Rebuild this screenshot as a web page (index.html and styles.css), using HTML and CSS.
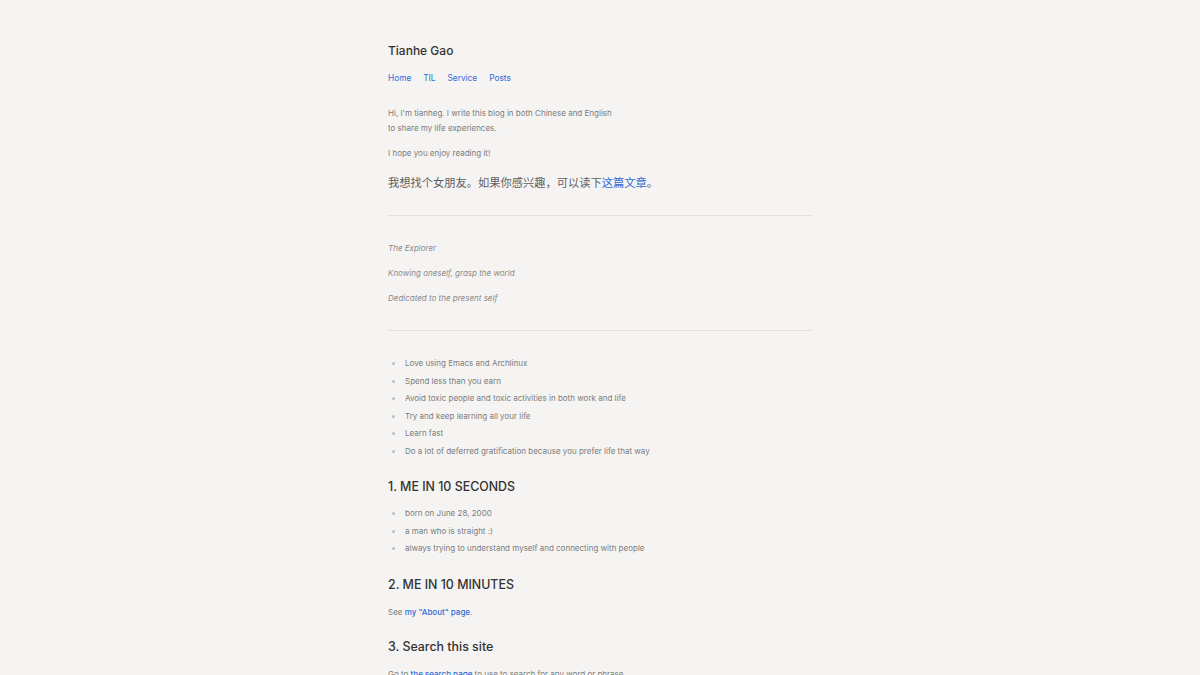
FILE: index.html
```html
<!DOCTYPE html>
<html lang="en">
<head>
    <meta charset="UTF-8">
    <meta name="viewport" content="width=device-width, initial-scale=1.0">
    <title>Tianhe Gao</title>
    <link rel="stylesheet" href="styles.css">
</head>
<body>
    <div class="page">
        <header class="site-header">
            <h1 class="site-title">Tianhe Gao</h1>
            <nav class="nav">
                <a href="#">Home</a>
                <a href="#">TIL</a>
                <a href="#">Service</a>
                <a href="#">Posts</a>
            </nav>
        </header>

        <main>
            <p class="intro">Hi, I'm tianheg. I write this blog in both Chinese and English<br>to share my life experiences.</p>
            <p class="intro">I hope you enjoy reading it!</p>
            <p class="zh">我想找个女朋友。如果你感兴趣，可以读下<a href="#">这篇文章</a>。</p>

            <hr>

            <div class="motto">
                <p>The Explorer</p>
                <p>Knowing oneself, grasp the world</p>
                <p>Dedicated to the present self</p>
            </div>

            <hr>

            <ul class="list">
                <li>Love using Emacs and Archlinux</li>
                <li>Spend less than you earn</li>
                <li>Avoid toxic people and toxic activities in both work and life</li>
                <li>Try and keep learning all your life</li>
                <li>Learn fast</li>
                <li>Do a lot of deferred gratification because you prefer life that way</li>
            </ul>

            <h2>1. ME IN 10 SECONDS</h2>
            <ul class="list">
                <li>born on June 28, 2000</li>
                <li>a man who is straight :)</li>
                <li>always trying to understand myself and connecting with people</li>
            </ul>

            <h2>2. ME IN 10 MINUTES</h2>
            <p class="text">See <a href="#">my "About" page</a>.</p>

            <h2>3. Search this site</h2>
            <p class="text">Go to <a href="#">the search page</a> to use to search for any word or phrase.</p>
        </main>
    </div>
</body>
</html>
```

FILE: styles.css
```css
body {
    margin: 0;
    background: #f5f4f2;
    font-family: Inter, "Noto Sans CJK SC", sans-serif;
    color: #7c7c7c;
}

.page {
    width: 424px;
    margin: 0 auto;
    padding-top: 42px;
}

a {
    color: #3169d6;
    text-decoration: none;
}

.site-title {
    margin: 0;
    font-size: 12px;
    font-weight: 500;
    color: #333;
    line-height: 18px;
}

.nav {
    display: flex;
    gap: 12px;
    margin-top: 11px;
    font-size: 8.3px;
    line-height: 14px;
}

main {
    padding-top: 21px;
}

.intro {
    margin: 0 0 10px;
    font-size: 8px;
    line-height: 15px;
}

.zh {
    margin: 12px 0 0;
    font-size: 11.25px;
    line-height: 20px;
    color: #606060;
}

hr {
    border: 0;
    border-top: 1px solid #e2e1df;
    margin: 22px 0;
}

.motto {
    padding: 3px 0 2px;
}

.motto p {
    margin: 0;
    font-size: 8px;
    line-height: 15px;
    font-style: italic;
    color: #8a8a8a;
}

.motto p + p {
    margin-top: 10px;
}

.list {
    margin: 0;
    padding: 2px 0 0;
    list-style: none;
    font-size: 8px;
    line-height: 17.5px;
}

.list li {
    display: flex;
    align-items: center;
}

.list li::before {
    content: "";
    width: 3px;
    height: 3px;
    border-radius: 50%;
    background: #bdbdbd;
    margin: 0 10px 0 4px;
    flex: none;
}

h2 {
    margin: 18px 0 7px;
    font-size: 12.4px;
    font-weight: 500;
    color: #333;
    line-height: 18px;
}

h2 + .text {
    margin-top: 11px;
}

.text {
    margin: 0;
    font-size: 8px;
    line-height: 15px;
}

.text a {
    font-weight: 500;
}
```
